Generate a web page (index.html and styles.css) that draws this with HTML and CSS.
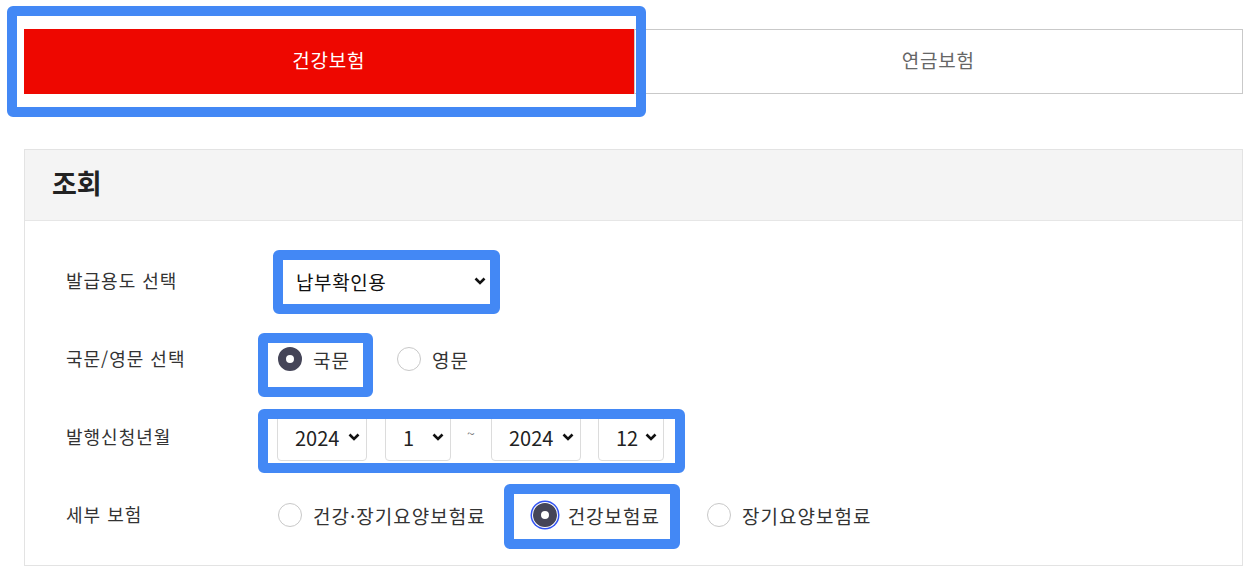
FILE: index.html
```html
<!DOCTYPE html>
<html lang="ko">
<head>
  <meta charset="utf-8">
  <title>보험료 납부확인서 조회</title>
  <meta name="viewport" content="width=device-width, initial-scale=1.0">
  <link rel="stylesheet" href="styles.css">
</head>
<body>
  <div class="tabs">
    <button class="tab active">건강보험</button>
    <button class="tab">연금보험</button>
  </div>

  <section class="panel">
    <h2 class="panel-title">조회</h2>

    <div class="panel-body">
      <div class="row">
        <span class="label">발급용도 선택</span>
        <span class="pick pick-purpose">
          <select class="purpose">
            <option>납부확인용</option>
            <option>소득공제용</option>
          </select>
          <svg class="chev" viewBox="0 0 12 8"><path d="M1.5 1.5 6 6l4.5-4.5"/></svg>
        </span>
      </div>

      <div class="row">
        <span class="label">국문/영문 선택</span>
        <div class="options">
          <label class="opt"><input type="radio" name="lang" checked> 국문</label>
          <label class="opt"><input type="radio" name="lang"> 영문</label>
        </div>
      </div>

      <div class="row">
        <span class="label">발행신청년월</span>
        <div class="period">
          <span class="pick year">
            <select><option>2024</option></select>
            <svg class="chev" viewBox="0 0 12 8"><path d="M1.5 1.5 6 6l4.5-4.5"/></svg>
          </span>
          <span class="pick month">
            <select><option>1</option></select>
            <svg class="chev" viewBox="0 0 12 8"><path d="M1.5 1.5 6 6l4.5-4.5"/></svg>
          </span>
          <span class="tilde">~</span>
          <span class="pick year">
            <select><option>2024</option></select>
            <svg class="chev" viewBox="0 0 12 8"><path d="M1.5 1.5 6 6l4.5-4.5"/></svg>
          </span>
          <span class="pick month last">
            <select><option>12</option></select>
            <svg class="chev" viewBox="0 0 12 8"><path d="M1.5 1.5 6 6l4.5-4.5"/></svg>
          </span>
        </div>
      </div>

      <div class="row">
        <span class="label">세부 보험</span>
        <div class="options">
          <label class="opt"><input type="radio" name="kind"> 건강·장기요양보험료</label>
          <label class="opt"><input type="radio" name="kind" class="focused" checked> 건강보험료</label>
          <label class="opt"><input type="radio" name="kind"> 장기요양보험료</label>
        </div>
      </div>
    </div>
  </section>

  <!-- highlight boxes -->
  <div class="mark mark-tab"></div>
  <div class="mark mark-purpose"></div>
  <div class="mark mark-lang"></div>
  <div class="mark mark-period"></div>
  <div class="mark mark-detail"></div>
</body>
</html>
```

FILE: styles.css
```css
body {
  margin: 0;
  font-family: "Noto Sans CJK KR", "Noto Sans", sans-serif;
  color: #333;
  background: #fff;
}

.tabs {
  display: flex;
  height: 65px;
  margin: 29px 16px 0 24px;
}

.tab {
  flex: 1;
  border: 1px solid #c9c9c9;
  background: #fff;
  font-family: inherit;
  font-size: 19px;
  letter-spacing: 0.8px;
  color: #666;
  padding: 0 0 5px;
}

.tab.active {
  background: #ee0700;
  border-color: #ee0700;
  color: #fff;
}

.panel {
  margin: 55px 16px 0 24px;
  border: 1px solid #e3e3e3;
}

.panel-title {
  box-sizing: border-box;
  height: 71px;
  margin: 0;
  padding: 0 0 5px 27px;
  display: flex;
  align-items: center;
  background: #f4f4f4;
  border-bottom: 1px solid #e6e6e6;
  font-size: 27px;
  font-weight: 700;
  color: #222;
}

.panel-body {
  display: flex;
  flex-direction: column;
  gap: 34px;
  padding: 38px 0 28px 41px;
}

.row {
  display: flex;
  align-items: center;
  height: 44px;
}

.label {
  width: 211px;
  flex-shrink: 0;
  font-size: 18px;
  letter-spacing: 1px;
  margin-top: -2px;
}

/* selects with custom chevron */
.pick {
  position: relative;
  display: inline-flex;
}

.pick select {
  appearance: none;
  -webkit-appearance: none;
  box-sizing: border-box;
  width: 100%;
  height: 48px;
  margin: 0;
  padding: 0 0 0 17px;
  border: 1px solid #dcdcdc;
  border-radius: 4px;
  background: #fff;
  font-family: inherit;
  font-size: 20px;
  color: #222;
}

.chev {
  position: absolute;
  top: 50%;
  right: 7px;
  width: 12px;
  height: 8px;
  margin-top: -4px;
  pointer-events: none;
}

.chev path {
  fill: none;
  stroke: #111;
  stroke-width: 2.6;
}

.pick-purpose {
  width: 217px;
  margin-left: 1px;
}

.pick-purpose select {
  height: 50px;
  border-color: #ccc;
  font-size: 19px;
  letter-spacing: 0.6px;
  color: #111;
}

.pick-purpose .chev {
  right: 9px;
}

.period {
  display: flex;
  align-items: center;
}

.year {
  width: 90px;
  margin-right: 18px;
}

.month {
  width: 66px;
}

.month.last {
  margin-left: -1px;
}

.tilde {
  width: 40px;
  text-align: center;
  font-size: 14px;
  color: #777;
  margin-top: -8px;
}

/* radios */
.options {
  display: flex;
  gap: 46px;
}

.opt {
  display: flex;
  align-items: center;
  gap: 11px;
  font-size: 19px;
  letter-spacing: 1px;
  color: #333;
}

.opt input {
  appearance: none;
  -webkit-appearance: none;
  box-sizing: border-box;
  width: 24px;
  height: 24px;
  margin: 0 0 0 1px;
  border: 1px solid #c8c8c8;
  border-radius: 50%;
  background: #fff;
}

.opt input:checked {
  border: 8px solid #454558;
}

.opt input.focused {
  box-shadow: 0 0 0 1px #fff, 0 0 0 2.5px #3152f2;
}

/* annotation boxes */
.mark {
  position: absolute;
  box-sizing: border-box;
  border: 10px solid #4388f5;
  border-radius: 6px;
}

.mark-tab {
  left: 7px;
  top: 6px;
  width: 639px;
  height: 111px;
}

.mark-purpose {
  left: 273px;
  top: 250px;
  width: 227px;
  height: 64px;
}

.mark-lang {
  left: 258px;
  top: 333px;
  width: 115px;
  height: 64px;
}

.mark-period {
  left: 258px;
  top: 409px;
  width: 427px;
  height: 64px;
}

.mark-detail {
  left: 504px;
  top: 484px;
  width: 176px;
  height: 65px;
}
```
